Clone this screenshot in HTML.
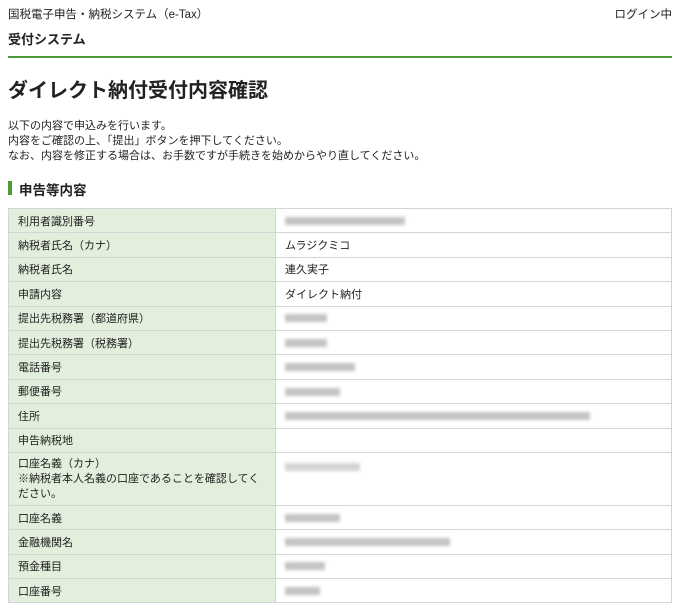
<!DOCTYPE html>
<html><head><meta charset="utf-8"><style>
*{margin:0;padding:0;box-sizing:border-box}
body{width:680px;height:613px;background:#fff;font-family:"Liberation Sans","Noto Sans CJK JP",sans-serif;color:#222;position:relative;overflow:hidden}
.a{position:absolute;white-space:nowrap}
table{position:absolute;left:8px;top:208px;width:664px;border-collapse:collapse;font-size:11px}
td{border:1px solid #d4d4d4;height:24.4px;padding:0 9px;vertical-align:middle}
td.l{background:#e2efdc;width:267px}
.b{display:inline-block;height:8px;background:#c4c4c4;filter:blur(1.5px);vertical-align:middle}
</style></head><body>
<div class="a" style="left:8px;top:6px;font-size:11.5px">国税電子申告・納税システム（e-Tax）</div>
<div class="a" style="right:8px;top:6px;font-size:11.5px">ログイン中</div>
<div class="a" style="left:8px;top:29px;font-size:13px;font-weight:bold">受付システム</div>
<div class="a" style="left:8px;top:56px;width:664px;height:2px;background:#4e9a3a"></div>
<div class="a" style="left:8px;top:74px;font-size:20px;font-weight:bold">ダイレクト納付受付内容確認</div>
<div class="a" style="left:8px;top:119px;font-size:11px;line-height:15px">以下の内容で申込みを行います。<br>内容をご確認の上、「提出」ボタンを押下してください。<br>なお、内容を修正する場合は、お手数ですが手続きを始めからやり直してください。</div>
<div class="a" style="left:8px;top:181px;width:4px;height:14px;background:#4e9a3a"></div>
<div class="a" style="left:19px;top:179px;font-size:13.5px;font-weight:bold">申告等内容</div>
<table>
<tr><td class="l">利用者識別番号</td><td><span class="b" style="width:120px"></span></td></tr>
<tr><td class="l">納税者氏名（カナ）</td><td>ムラジクミコ</td></tr>
<tr><td class="l">納税者氏名</td><td>連久実子</td></tr>
<tr><td class="l">申請内容</td><td>ダイレクト納付</td></tr>
<tr><td class="l">提出先税務署（都道府県）</td><td><span class="b" style="width:42px"></span></td></tr>
<tr><td class="l">提出先税務署（税務署）</td><td><span class="b" style="width:42px"></span></td></tr>
<tr><td class="l">電話番号</td><td><span class="b" style="width:70px"></span></td></tr>
<tr><td class="l">郵便番号</td><td><span class="b" style="width:55px"></span></td></tr>
<tr><td class="l">住所</td><td><span class="b" style="width:305px"></span></td></tr>
<tr><td class="l">申告納税地</td><td></td></tr>
<tr><td class="l" style="height:53px;vertical-align:top;padding-top:4px;line-height:15px">口座名義（カナ）<br>※納税者本人名義の口座であることを確認してく<br>ださい。</td><td style="vertical-align:top;padding-top:8px"><span class="b" style="width:75px;background:#d4d4d4"></span></td></tr>
<tr><td class="l">口座名義</td><td><span class="b" style="width:55px"></span></td></tr>
<tr><td class="l">金融機関名</td><td><span class="b" style="width:165px"></span></td></tr>
<tr><td class="l">預金種目</td><td><span class="b" style="width:40px"></span></td></tr>
<tr><td class="l">口座番号</td><td><span class="b" style="width:35px"></span></td></tr>
</table>
</body></html>
